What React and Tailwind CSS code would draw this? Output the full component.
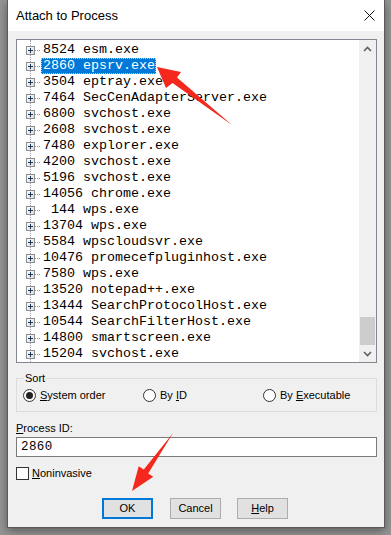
import React from "react";

const rows = [
  "8524 esm.exe",
  "2860 epsrv.exe",
  "3504 eptray.exe",
  "7464 SecCenAdapterServer.exe",
  "6800 svchost.exe",
  "2608 svchost.exe",
  "7480 explorer.exe",
  "4200 svchost.exe",
  "5196 svchost.exe",
  "14056 chrome.exe",
  " 144 wps.exe",
  "13704 wps.exe",
  "5584 wpscloudsvr.exe",
  "10476 promecefpluginhost.exe",
  "7580 wps.exe",
  "13520 notepad++.exe",
  "13444 SearchProtocolHost.exe",
  "10544 SearchFilterHost.exe",
  "14800 smartscreen.exe",
  "15204 svchost.exe",
];

const ui = { fontFamily: '"Liberation Sans", Arial, sans-serif' };
const mono = { fontFamily: '"Liberation Mono", "Courier New", monospace' };

function PlusBox() {
  return (
    <svg width="9" height="9" viewBox="0 0 9 9" className="shrink-0 block">
      <defs>
        <linearGradient id="pb" x1="0" y1="0" x2="1" y2="1">
          <stop offset="0" stopColor="#ffffff" />
          <stop offset="1" stopColor="#d8d8d8" />
        </linearGradient>
      </defs>
      <rect x="0.5" y="0.5" width="8" height="8" fill="url(#pb)" stroke="#8e8f8f" />
      <path d="M2 4.5H7M4.5 2V7" stroke="#1e395b" />
    </svg>
  );
}

function Radio({ checked }) {
  return (
    <span className="w-[13px] h-[13px] rounded-full border border-[#333] bg-white flex items-center justify-center shrink-0">
      {checked && <span className="w-[7px] h-[7px] rounded-full bg-[#222]" />}
    </span>
  );
}

function Chevron({ up }) {
  return (
    <svg width="9" height="6" viewBox="0 0 9 6">
      <path
        d={up ? "M1 5L4.5 1.5L8 5" : "M1 1L4.5 4.5L8 1"}
        fill="none"
        stroke="#606060"
        strokeWidth="1.6"
      />
    </svg>
  );
}

export default function App() {
  return (
    <div
      className="relative w-[391px] h-[535px] overflow-hidden bg-[#959595]"
      style={ui}
    >
      <div className="ml-[7px] w-[378px] h-[528px] border-x border-b border-[#5a5a5a] bg-[#f0f0f0] flex flex-col shadow-[0_3px_9px_rgba(0,0,0,0.4)]">
        {/* Title bar */}
        <div className="h-[31px] bg-white flex items-center justify-between pl-[8px] pr-[9px]">
          <span className="text-[13px] text-black leading-none">Attach to Process</span>
          <svg width="11" height="11" viewBox="0 0 11 11">
            <path d="M0.5 0.5L10.5 10.5M10.5 0.5L0.5 10.5" stroke="#111" strokeWidth="1" />
          </svg>
        </div>

        {/* Client */}
        <div className="flex flex-col px-[8px]">
          {/* Tree list */}
          <div className="mt-[8px] w-[361px] h-[324px] border border-[#828790] bg-white flex">
            <div className="relative flex-1 pt-[2px] overflow-hidden">
              <div className="absolute left-[13px] top-0 bottom-0 border-l border-dotted border-[#a0a0a0]" />
              {rows.map((r, i) => {
                const sel = i === 1;
                return (
                  <div key={i} className="relative h-[16px] flex items-center pl-[9px]">
                    <PlusBox />
                    <span className="w-[5px] border-t border-dotted border-[#a0a0a0] mr-[1px]" />
                    <span
                      className={
                        "h-[16px] flex items-center pl-[2px] pr-[1px] whitespace-pre text-[13.33px] leading-none " +
                        (sel
                          ? "bg-[#0078d7] text-white outline outline-1 outline-dotted outline-[#e8d24a] -outline-offset-1"
                          : "text-black")
                      }
                      style={mono}
                    >
                      {r}
                    </span>
                  </div>
                );
              })}
            </div>
            {/* Scrollbar */}
            <div className="w-[17px] bg-[#f0f0f0] flex flex-col">
              <div className="h-[17px] flex items-center justify-center">
                <Chevron up />
              </div>
              <div className="flex-1 flex flex-col justify-end px-[1px]">
                <div className="h-[28px] bg-[#cdcdcd]" />
              </div>
              <div className="h-[17px] flex items-center justify-center">
                <Chevron />
              </div>
            </div>
          </div>

          {/* Sort group */}
          <div className="relative mt-[15px] w-[361px] h-[34px] border border-[#dcdcdc]">
            <span className="absolute -top-[7px] left-[7px] px-[1px] bg-[#f0f0f0] text-[11px] leading-[13px] text-black">
              Sort
            </span>
            <div className="h-full flex items-center pl-[6px] text-[11px] text-black">
              <label className="w-[120px] flex items-center gap-[4px]">
                <Radio checked />
                <span><u className="underline-offset-[1px]">S</u>ystem order</span>
              </label>
              <label className="w-[120px] flex items-center gap-[4px]">
                <Radio />
                <span>By <u className="underline-offset-[1px]">I</u>D</span>
              </label>
              <label className="flex items-center gap-[4px]">
                <Radio />
                <span>By <u className="underline-offset-[1px]">E</u>xecutable</span>
              </label>
            </div>
          </div>

          {/* Process ID */}
          <div className="mt-[10px] text-[11px] leading-[13px] text-black">
            <u className="underline-offset-[1px]">P</u>rocess ID:
          </div>
          <div className="mt-[2px] w-[361px] h-[20px] border border-[#7a7a7a] bg-white flex items-center pl-[4px]">
            <span className="text-[12.5px] tracking-[0.4px] text-black leading-none" style={mono}>
              2860
            </span>
          </div>

          {/* Noninvasive */}
          <label className="mt-[8px] flex items-center gap-[3px] text-[11px] text-black">
            <span className="w-[13px] h-[13px] border border-[#333] bg-white shrink-0" />
            <span><u className="underline-offset-[1px]">N</u>oninvasive</span>
          </label>

          {/* Buttons */}
          <div className="mt-[16px] flex items-center pl-[86px] text-[11px] text-black">
            <button className="w-[51px] h-[21px] bg-[#e1e1e1] border-2 border-[#0078d7] flex items-center justify-center">
              OK
            </button>
            <button className="ml-[17px] w-[51px] h-[21px] bg-[#e1e1e1] border border-[#adadad] flex items-center justify-center">
              Cancel
            </button>
            <button className="ml-[16px] w-[51px] h-[21px] bg-[#e1e1e1] border border-[#adadad] flex items-center justify-center">
              <span><u className="underline-offset-[1px]">H</u>elp</span>
            </button>
          </div>
        </div>
      </div>

      {/* Annotation arrows */}
      <svg
        className="absolute left-0 top-0 pointer-events-none"
        width="391"
        height="535"
        viewBox="0 0 391 535"
      >
        <polygon
          points="157,67 181,72 177,77.5 232,125 172.5,83 166,88"
          fill="#f4281c"
        />
        <polygon
          points="132,491 138.7,466.2 143.8,469.6 173,433 148.2,473.4 153.3,476.8"
          fill="#f4281c"
        />
      </svg>
    </div>
  );
}
